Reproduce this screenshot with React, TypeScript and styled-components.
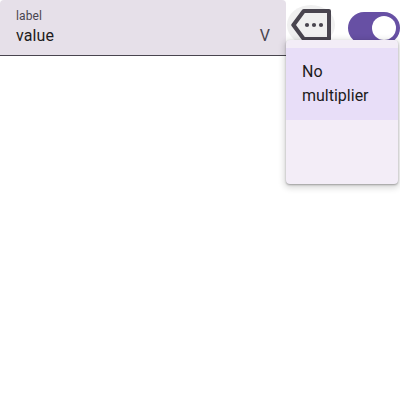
import React from 'react';
import styled, { createGlobalStyle } from 'styled-components';

const GlobalStyle = createGlobalStyle`
  body {
    margin: 0;
    background: #fff;
    overflow: hidden;
    font-family: Roboto, sans-serif;
    -webkit-font-smoothing: antialiased;
  }
`;

const Page = styled.main`
  position: relative;
  width: 400px;
  height: 400px;
`;

const Row = styled.div`
  display: flex;
  align-items: flex-start;
`;

const Field = styled.div`
  display: flex;
  align-items: flex-end;
  justify-content: space-between;
  box-sizing: border-box;
  width: 286px;
  height: 56px;
  padding: 8px 16px 7px;
  background: #e6e0e9;
  border-bottom: 1px solid #49454f;
  border-radius: 4px 4px 0 0;
`;

const FieldText = styled.div`
  display: flex;
  flex-direction: column;
`;

const Label = styled.span`
  font-size: 12px;
  line-height: 16px;
  letter-spacing: 0.1px;
  color: #49454f;
`;

const Value = styled.span<{ $muted?: boolean }>`
  font-size: 16px;
  line-height: 24px;
  letter-spacing: ${(p) => (p.$muted ? '0' : '0.1px')};
  color: ${(p) => (p.$muted ? '#49454f' : '#1d1b20')};
`;

const IconButton = styled.button`
  display: flex;
  align-items: center;
  justify-content: center;
  width: 48px;
  height: 40px;
  margin: 5px 0 0 1px;
  padding: 0;
  border: 0;
  border-radius: 50%;
  background: #f0f0f0;
`;

const Switch = styled.div`
  display: flex;
  justify-content: flex-end;
  box-sizing: border-box;
  width: 52px;
  height: 32px;
  margin: 12px 0 0 13px;
  padding: 4px;
  border-radius: 16px;
  background: #6750a4;
`;

const Knob = styled.span`
  width: 24px;
  height: 24px;
  border-radius: 50%;
  background: #fff;
`;

const Menu = styled.ul`
  position: absolute;
  left: 286px;
  top: 40px;
  box-sizing: border-box;
  width: 112px;
  height: 144px;
  margin: 0;
  padding: 8px 0;
  list-style: none;
  border-radius: 4px;
  background: #f3edf7;
  box-shadow: 0 1px 2px rgba(0, 0, 0, 0.3), 0 2px 6px 2px rgba(0, 0, 0, 0.15);
`;

const MenuItem = styled.li<{ $selected?: boolean }>`
  box-sizing: border-box;
  min-height: 56px;
  padding: 12px 16px;
  font-size: 16px;
  line-height: 24px;
  color: #1d1b20;
  background: ${(p) => (p.$selected ? '#e8def8' : 'transparent')};
`;

function MoreIcon() {
  return (
    <svg width="40" height="32" viewBox="0 0 40 32" fill="#49454f">
      <path
        d="M13 0H38Q40 0 40 2V30Q40 32 38 32H13Q11.6 32 10.8 30.8L0.4 16.8Q0 16 0.4 15.2L10.8 1.2Q11.6 0 13 0ZM13.8 4L5 16L13.8 28H36V4Z"
        fillRule="evenodd"
      />
      <circle cx="16" cy="16" r="2.1" />
      <circle cx="23" cy="16" r="2.1" />
      <circle cx="30" cy="16" r="2.1" />
    </svg>
  );
}

export default function App() {
  return (
    <Page>
      <GlobalStyle />
      <Row>
        <Field>
          <FieldText>
            <Label>label</Label>
            <Value>value</Value>
          </FieldText>
          <Value $muted>V</Value>
        </Field>
        <IconButton aria-label="Multiplier">
          <MoreIcon />
        </IconButton>
        <Switch role="switch" aria-checked="true">
          <Knob />
        </Switch>
      </Row>
      <Menu>
        <MenuItem $selected>No multiplier</MenuItem>
        <MenuItem />
      </Menu>
    </Page>
  );
}
